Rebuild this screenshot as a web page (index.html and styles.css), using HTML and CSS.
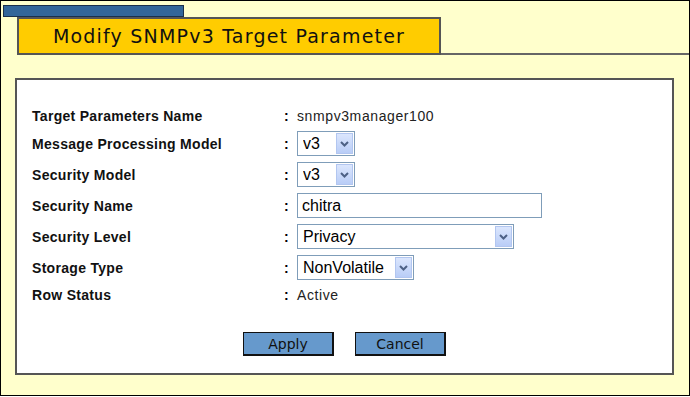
FILE: index.html
```html
<!DOCTYPE html>
<html lang="en">
<head>
    <meta charset="UTF-8">
    <title>Modify SNMPv3 Target Parameter</title>
    <link rel="stylesheet" href="styles.css">
</head>
<body>
    <div class="frame">
        <div class="tab"></div>
        <div class="title-row">
            <div class="title">Modify SNMPv3 Target Parameter</div>
            <div class="title-line"></div>
        </div>

        <div class="panel">
            <div class="field">
                <span class="label">Target Parameters Name</span>
                <span class="colon">:</span>
                <span class="value">snmpv3manager100</span>
            </div>
            <div class="field">
                <span class="label">Message Processing Model</span>
                <span class="colon">:</span>
                <div class="dd dd-small">
                    <select><option>v3</option></select>
                    <span class="dd-btn"><svg viewBox="0 0 9 6" width="9" height="6"><path d="M1 1 L4.5 4.5 L8 1" fill="none" stroke="#4d6185" stroke-width="2"/></svg></span>
                </div>
            </div>
            <div class="field">
                <span class="label">Security Model</span>
                <span class="colon">:</span>
                <div class="dd dd-small">
                    <select><option>v3</option></select>
                    <span class="dd-btn"><svg viewBox="0 0 9 6" width="9" height="6"><path d="M1 1 L4.5 4.5 L8 1" fill="none" stroke="#4d6185" stroke-width="2"/></svg></span>
                </div>
            </div>
            <div class="field">
                <span class="label">Security Name</span>
                <span class="colon">:</span>
                <input class="text-input" type="text" value="chitra">
            </div>
            <div class="field">
                <span class="label">Security Level</span>
                <span class="colon">:</span>
                <div class="dd dd-wide">
                    <select><option>Privacy</option></select>
                    <span class="dd-btn"><svg viewBox="0 0 9 6" width="9" height="6"><path d="M1 1 L4.5 4.5 L8 1" fill="none" stroke="#4d6185" stroke-width="2"/></svg></span>
                </div>
            </div>
            <div class="field">
                <span class="label">Storage Type</span>
                <span class="colon">:</span>
                <div class="dd dd-mid">
                    <select><option>NonVolatile</option></select>
                    <span class="dd-btn"><svg viewBox="0 0 9 6" width="9" height="6"><path d="M1 1 L4.5 4.5 L8 1" fill="none" stroke="#4d6185" stroke-width="2"/></svg></span>
                </div>
            </div>
            <div class="field">
                <span class="label">Row Status</span>
                <span class="colon">:</span>
                <span class="value">Active</span>
            </div>

            <div class="buttons">
                <button class="btn">Apply</button>
                <button class="btn">Cancel</button>
            </div>
        </div>
    </div>
</body>
</html>
```

FILE: styles.css
```css
body {
    margin: 0;
    font-family: "Liberation Sans", Arial, sans-serif;
    color: #000;
}
.frame {
    box-sizing: border-box;
    height: 396px;
    border: 1px solid #000;
    background: #ffffcc;
}
.tab {
    box-sizing: border-box;
    width: 181px;
    height: 12px;
    margin: 4px 0 0 2px;
    background: #336699;
    border: 1px solid #1a2f4a;
}
.title-row {
    display: flex;
    margin-left: 16px;
}
.title {
    box-sizing: border-box;
    width: 424px;
    height: 38px;
    border: 2px solid #555;
    background: #ffcc00;
    font-family: "DejaVu Sans", sans-serif;
    font-size: 19px;
    letter-spacing: 1.2px;
    line-height: 35px;
    text-align: center;
    color: #111;
}
.title-line {
    flex: 1;
    border-bottom: 2px solid #666;
}
.panel {
    box-sizing: border-box;
    height: 297px;
    margin: 23px 15px 0 14px;
    padding: 27px 15px 0 15px;
    background: #fff;
    border: 2px solid #555;
}
.field {
    display: flex;
    align-items: center;
    margin-bottom: 6px;
}
.label {
    width: 252px;
    font-size: 14px;
    font-weight: bold;
    letter-spacing: 0.3px;
    line-height: 18px;
    color: #111;
}
.colon {
    width: 13px;
    font-size: 14px;
    font-weight: bold;
    line-height: 18px;
}
.value {
    font-size: 14px;
    letter-spacing: 0.6px;
    line-height: 18px;
    color: #222;
}
.dd {
    position: relative;
    height: 25px;
}
.dd select {
    appearance: none;
    -webkit-appearance: none;
    box-sizing: border-box;
    width: 100%;
    height: 25px;
    margin: 0;
    padding: 0 0 0 5px;
    border: 1px solid #7f9db9;
    border-radius: 0;
    background: #fff;
    font-family: "Liberation Sans", Arial, sans-serif;
    font-size: 16px;
    color: #000;
}
.dd-btn {
    position: absolute;
    top: 2px;
    right: 2px;
    bottom: 2px;
    width: 17px;
    display: flex;
    align-items: center;
    justify-content: center;
    background: linear-gradient(#dbe6fd, #b9cdf7);
    border: 1px solid #b2c6f0;
    box-sizing: border-box;
}
.dd-small {
    width: 58px;
}
.dd-mid {
    width: 117px;
}
.dd-wide {
    width: 217px;
}
.text-input {
    box-sizing: border-box;
    width: 245px;
    height: 25px;
    margin: 0;
    padding: 0 0 0 4px;
    border: 1px solid #7f9db9;
    font-family: "Liberation Sans", Arial, sans-serif;
    font-size: 16px;
    color: #000;
}
.buttons {
    display: flex;
    justify-content: center;
    gap: 21px;
    margin-top: 28px;
}
.btn {
    box-sizing: border-box;
    width: 91px;
    height: 24px;
    padding: 0;
    background: #6699cc;
    border: 1px solid #111;
    border-right-width: 2px;
    border-bottom-width: 2px;
    font-family: "DejaVu Sans", sans-serif;
    font-size: 14px;
    color: #111;
}
```
